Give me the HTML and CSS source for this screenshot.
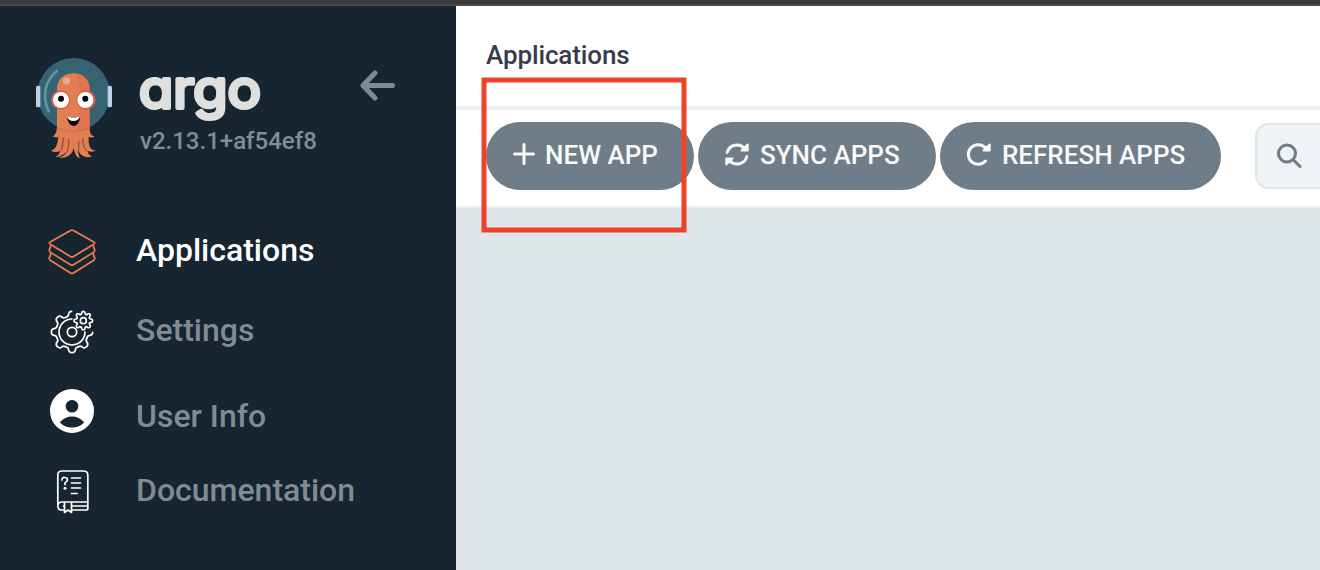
FILE: index.html
```html
<!DOCTYPE html>
<html lang="en">
<head>
<meta charset="utf-8">
<title>Applications - Argo CD</title>
<link rel="stylesheet" href="styles.css">
</head>
<body>
<div class="window-edge"></div>
<div class="app">
  <aside class="sidebar">
    <div class="brand">
      <svg class="mascot" width="100" height="120" viewBox="0 0 300 360">
        <circle cx="149" cy="139" r="109" fill="#3b617d"/>
        <circle cx="149" cy="139" r="104" fill="#35636f"/>
        <rect x="36" y="113" width="13" height="65" rx="5" fill="#bdd0e8"/>
        <rect x="251" y="113" width="13" height="65" rx="5" fill="#bdd0e8"/>
        <path d="M99 69C63 98 53 144 74 190" fill="none" stroke="#5f9898" stroke-width="8" stroke-linecap="round"/>
        <path d="M99 122C99 60 197 60 197 122V240C197 256 202 264 212 265Q205 271 194 267C193 291 197 306 215 308Q203 314 190 308Q193 320 204 325Q188 332 172 321Q162 312 163 300Q160 317 168 329Q155 332 149 300Q143 332 104 329Q122 325 127 312Q108 329 94 327Q108 320 108 309Q94 315 81 308Q100 304 103 267Q94 270 85 265Q96 263 99 240Z" fill="#e27e51"/>
        <path d="M149 76C208 75 197 136 197 240Q180 249 156 251C169 190 180 92 149 76Z" fill="#df7049" opacity=".65"/>
        <path d="M99 241Q149 260 197 241" fill="none" stroke="#d96c49" stroke-width="5"/>
        <g fill="none" stroke="#9e5142" stroke-width="4" stroke-linecap="round"><path d="M118 270Q119 290 111 306"/><path d="M133 274Q137 295 127 315"/><path d="M164 280V305M177 272Q176 294 187 307"/></g>
        <circle cx="127" cy="99" r="11" fill="#edaa8b"/>
        <circle cx="110" cy="156" r="29" fill="#de5a3e"/><circle cx="186" cy="156" r="29" fill="#de5a3e"/>
        <circle cx="111" cy="156" r="24" fill="#fff"/><circle cx="184" cy="156" r="24" fill="#fff"/>
        <circle cx="111" cy="152" r="9"/><circle cx="184" cy="152" r="9"/>
        <path d="M129 204Q148 215 168 204C167 244 132 244 129 204Z" fill="#080a0b"/>
        <path d="M129 204Q148 215 168 204Q164 219 148 219Q133 219 129 204Z" fill="#fff"/>
      </svg>
      <div class="brand-text">
        <svg class="wordmark" width="130" height="60" viewBox="0 0 130 60"><text x="1" y="45.500" textLength="122" lengthAdjust="spacingAndGlyphs">argo</text></svg>
        <div class="version">v2.13.1+af54ef8</div>
      </div>
      <svg class="collapse" width="36" height="32" viewBox="0 0 36 32"><path d="M15 3L3 15.500L15 28M3 15.500H32.500"/></svg>
    </div>
    <nav class="nav">
      <a class="nav-item active"><svg class="nav-icon layers" viewBox="0 0 48 48"><path d="M22.500 2.500Q24 1.700 25.500 2.500L45.800 14Q47.500 15 45.800 16.300L25.500 28.500Q24 29.300 22.500 28.500L2.200 16.300Q.5 15 2.200 14Z"/><path d="M3 17L1.800 20.700Q.5 22.500 2.200 24.200L22.500 36.700Q24 37.500 25.500 36.700L45.800 24.200Q47.500 22.500 46.200 20.700L45 17"/><path d="M3 25L1.800 28.700Q.5 30.500 2.200 32.200L22.500 45Q24 45.800 25.500 45L45.800 32.200Q47.500 30.500 46.200 28.700L45 25"/></svg><span>Applications</span></a>
      <a class="nav-item"><svg class="nav-icon line gears" viewBox="0 0 144 144">
        <defs>
          <path id="tooth" d="M-18.400 -44.300C-13 -46 -10 -48 -10 -54Q-9 -62 0 -62Q9 -62 10 -54C10 -48 13 -46 18.400 -44.300"/>
          <path id="cog" d="M-7.700 -18.500Q-5 -19 -5 -23Q-4 -28 0 -28Q4 -28 5 -23Q5 -19 7.700 -18.500"/>
        </defs>
        <g transform="translate(72 72)">
          <path d="M-18.400 -44.300C-13 -46 -10 -48 -10 -54Q-9 -62 -1 -62M62 1Q62 9 54 10C48 10 46 13 44.300 18.400"/>
          <use href="#tooth" transform="rotate(135)"/><use href="#tooth" transform="rotate(180)"/><use href="#tooth" transform="rotate(225)"/><use href="#tooth" transform="rotate(270)"/><use href="#tooth" transform="rotate(315)"/>
          <path d="M0 -39A39 39 0 1 0 39 0"/><circle r="14"/>
        </g>
        <g transform="translate(106 38)">
          <use href="#cog"/><use href="#cog" transform="rotate(45)"/><use href="#cog" transform="rotate(90)"/><use href="#cog" transform="rotate(135)"/><use href="#cog" transform="rotate(180)"/><use href="#cog" transform="rotate(225)"/><use href="#cog" transform="rotate(270)"/><use href="#cog" transform="rotate(315)"/><circle r="9"/>
        </g></svg><span>Settings</span></a>
      <a class="nav-item user"><svg class="nav-icon" viewBox="0 0 48 48"><circle cx="24" cy="24" r="22" fill="#fff"/><circle cx="24" cy="19.200" r="6.300" fill="#162530"/><path d="M11.800 35.200Q17 29.500 24 29.500T36.200 35.200Q31.500 40.500 24 40.500T11.800 35.200Z" fill="#162530"/></svg><span>User Info</span></a>
      <a class="nav-item docs"><svg class="nav-icon line book" viewBox="0 0 48 48"><path d="M16.500 42H13.500Q9.800 42 9.800 37.500V7Q9.800 3 14 3H35.500Q39.800 3 39.800 7V41Q39.800 42 38.500 42H23.500M9.800 37Q10.500 34 14 34H39.500M15.500 38H16.500M23.500 38H39.500M16.500 34V44.500L20 42L23.500 44.500V34"/><path d="M23.500 10H32.500M23.500 15H32.500M23.500 20H32.500M23.500 25.500H29"/><path d="M14 12Q14 9 17 9.500Q20.500 10 19 13L17 15V16.500"/><circle class="dot" cx="17" cy="20.300" r="1.500"/></svg><span>Documentation</span></a>
    </nav>
  </aside>
  <main class="main">
    <header class="page-title"><h1>Applications</h1></header>
    <div class="toolbar">
      <button class="btn new"><svg width="22" height="22" viewBox="0 0 22 22"><path d="M11 1.500V20.500M1.500 11H20.500"/></svg><span>NEW APP</span></button>
      <button class="btn sync"><svg width="26" height="26" viewBox="0 0 26 26"><path d="M3.200 10.500A10 10 0 0 1 20.500 6.500M22.800 14.500A10 10 0 0 1 5.500 18.500"/><path class="head" d="M23.700 2.500V8.500H17.500ZM2.300 22.500V16.500H8.500Z"/></svg><span>SYNC APPS</span></button>
      <button class="btn refresh"><svg width="26" height="26" viewBox="0 0 26 26"><path d="M19.500 19A9.800 9.800 0 1 1 19.500 6"/><path class="head" d="M23.700 2.500V8.500H17.500Z"/></svg><span>REFRESH APPS</span></button>
      <div class="search"><svg width="26" height="26" viewBox="0 0 26 26"><circle cx="11" cy="10.500" r="8.500"/><path d="M17.500 17L24 23.500"/></svg></div>
    </div>
    <section class="content"></section>
  </main>
</div>
<div class="highlight"></div>
</body>
</html>
```
FILE: styles.css
```css
* { box-sizing: border-box; }
body { margin: 0; height: 570px; overflow: hidden; display: flex; flex-direction: column; font-family: Roboto, sans-serif; font-weight: 500; position: relative; }
.window-edge { height: 6px; flex: none; background: #3a3a3a; border-bottom: 2px solid #4a4a4a; }
.app { display: flex; flex: 1; min-height: 0; }
.sidebar { width: 456px; flex: none; background: #162530; }
.brand { display: flex; align-items: flex-start; padding: 42px 0 0 24px; height: 204px; }
.mascot { flex: none; }
.brand-text { width: 234px; flex: none; padding: 14px 0 0 14px; }
.wordmark { display: block; overflow: visible; }
.wordmark text { font: 400 53px Inter, sans-serif; font-feature-settings: "cv11"; fill: #dee0e0; stroke: #dee0e0; stroke-width: 4px; stroke-linejoin: round; }
.version { font-size: 24px; line-height: 28px; color: #818c94; margin: 5px 0 0 2px; white-space: nowrap; }
.collapse { margin: 22px 0 0 2px; flex: none; fill: none; stroke: #818a91; stroke-width: 5px; stroke-linecap: round; stroke-linejoin: round; }
.nav { display: flex; flex-direction: column; padding-left: 48px; }
.nav-item { display: flex; align-items: center; gap: 40px; height: 80px; font-size: 32px; color: #818b92; }
.nav-item.active { color: #fff; }
.nav-item span { line-height: 40px; }
.nav-item.user { height: 92px; }
.nav-item.docs { height: 56px; }
.nav-icon { width: 48px; height: 48px; flex: none; fill: none; }
.layers { stroke: #ee7b4d; stroke-width: 1.7px; stroke-linejoin: round; margin-top: 4px; }
.line { stroke: #fff; stroke-width: 1.7px; stroke-linecap: round; stroke-linejoin: round; }
.gears { stroke-width: 5px; margin-top: 4px; }
.user .nav-icon { margin-bottom: 10px; }
.book { margin-top: 3px; }
.dot { fill: #fff; stroke: none; }
.main { flex: 1; min-width: 0; display: flex; flex-direction: column; background: #fff; }
.page-title { height: 104px; flex: none; border-bottom: 4px solid #eef1f4; padding: 33px 0 0 30px; }
h1 { margin: 0; font-size: 26px; line-height: 32px; font-weight: 500; letter-spacing: -.12px; color: #363c4a; }
.toolbar { height: 98px; flex: none; display: flex; gap: 4px; padding: 12px 0 0 30px; border-bottom: 2px solid #eceff2; }
.btn { height: 68px; flex: none; border: 0; border-radius: 34px; background: #6f7d88; color: #f8fafa; font: 500 26px Roboto, sans-serif; display: flex; align-items: center; padding: 0 0 2px 26px; gap: 10px; white-space: nowrap; }
.btn svg { fill: none; stroke: #f8fafa; stroke-width: 3px; stroke-linecap: round; stroke-linejoin: round; flex: none; }
.btn svg .head { fill: #f8fafa; stroke-width: 2px; }
.new { width: 208px; padding-left: 27px; }
.new svg { margin-bottom: 2px; }
.sync { width: 238px; }
.refresh { width: 281px; }
.search { width: 120px; height: 66px; flex: none; margin: 1px 0 0 30px; border: 2px solid #dee6e9; border-radius: 14px; background: #eff3f6; padding: 18px 19px; }
.search svg { fill: none; stroke: #6f7d88; stroke-width: 3.1px; stroke-linecap: round; }
.content { flex: 1; background: #dee6e9; }
.highlight { position: absolute; left: 482px; top: 78px; width: 205px; height: 155px; border: 5px solid #ee4328; transform: translate(-.5px, -.5px); }
```
